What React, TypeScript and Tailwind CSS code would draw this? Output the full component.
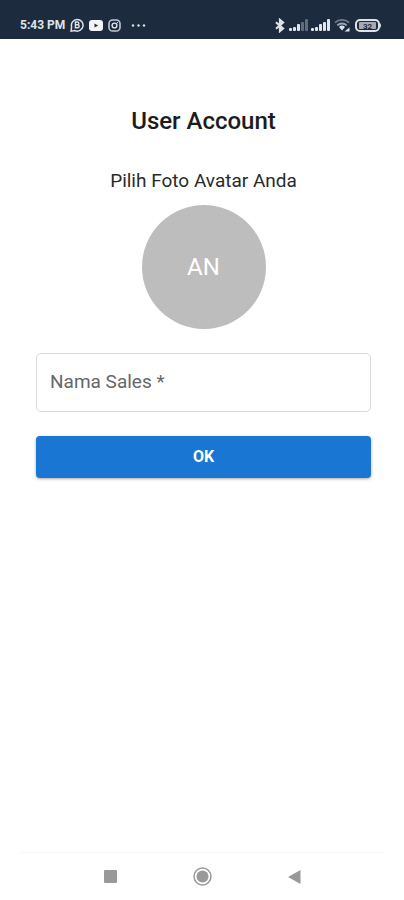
import { useState } from "react";

function SignalIcon({ level }: { level: number }) {
  return (
    <svg width="19" height="12" viewBox="0 0 19 12" fill="#e3e7ec" aria-hidden="true">
      {[3, 4, 7, 9, 12].map((height, i) => (
        <rect
          key={height}
          x={i * 4}
          y={12 - height}
          width="3"
          height={height}
          rx="1"
          opacity={i < level ? 1 : 0.35}
        />
      ))}
    </svg>
  );
}

function StatusBar() {
  return (
    <header className="flex h-[39px] items-end justify-between bg-[#1d2b3f] pr-[22px] pb-[6px] pl-5 text-[#dfe3e8]">
      <div className="flex h-4 items-center">
        <span className="text-xs font-bold">5:43 PM</span>
        <svg className="ml-[5px]" width="14" height="14" viewBox="0 0 13 13" fill="none" stroke="currentColor" aria-hidden="true">
          <path d="M1 12.2l.5-4A5.4 5.4 0 1 1 4.5 11.7z" strokeWidth="1.4" />
          <path d="M5 3.7h1.9a1.3 1.3 0 0 1 0 2.6H5zM5 6.3h2.1a1.4 1.4 0 0 1 0 2.8H5z" strokeWidth="1.3" />
        </svg>
        <svg className="ml-[5px]" width="14" height="11" viewBox="0 0 14 11" aria-hidden="true">
          <rect width="14" height="11" rx="3" fill="#f2f4f6" />
          <path d="M5.5 3.4v4.2l3.6-2.1z" fill="#1d2b3f" />
        </svg>
        <svg className="ml-[5px]" width="13" height="13" viewBox="0 0 13 13" fill="none" stroke="currentColor" aria-hidden="true">
          <rect x="1" y="1" width="11" height="11" rx="3.6" strokeWidth="1.6" opacity=".85" />
          <circle cx="6.5" cy="6.5" r="2.4" strokeWidth="1.4" />
          <circle cx="9.4" cy="3.6" r=".7" fill="currentColor" stroke="none" />
        </svg>
        <svg className="ml-[10px]" width="15" height="3" viewBox="0 0 15 3" fill="currentColor" aria-hidden="true">
          <circle cx="2" cy="1.5" r="1.2" />
          <circle cx="7.5" cy="1.5" r="1.2" />
          <circle cx="13" cy="1.5" r="1.2" />
        </svg>
      </div>
      <div className="flex h-4 items-center">
        <svg width="10" height="15" viewBox="0 0 10 15" fill="none" stroke="currentColor" strokeWidth="2.2" aria-hidden="true">
          <path d="M1 4.2l7 6.2L5 13V2l3 2.6L1 10.8" />
        </svg>
        <span className="ml-1"><SignalIcon level={3} /></span>
        <span className="ml-[3px]"><SignalIcon level={5} /></span>
        <svg className="ml-1" width="17" height="14" viewBox="0 0 17 14" fill="none" stroke="currentColor" aria-hidden="true">
          <path d="M1 4.6a10.5 10.5 0 0 1 14 0" strokeWidth="1.8" opacity=".45" />
          <path d="M3.3 7.3a7 7 0 0 1 9.4 0" strokeWidth="1.8" opacity=".65" />
          <path d="M5 9a4.4 4.4 0 0 1 6 0l-3 3.4z" fill="currentColor" stroke="none" />
          <path d="M10.5 13.5l5-4v4z" fill="currentColor" stroke="none" />
        </svg>
        <svg className="ml-1" width="27" height="13" viewBox="0 0 27 13" aria-hidden="true">
          <rect x="1" y="1" width="23" height="11" rx="4" fill="none" stroke="currentColor" strokeWidth="2" />
          <rect x="4" y="3" width="17" height="7" rx="1" fill="currentColor" opacity=".7" />
          <path d="M25 4q2 2.5 0 5z" fill="currentColor" />
          <text x="12.5" y="9.5" textAnchor="middle" fontSize="8" fontWeight="700" fill="#1d2b3f">32</text>
        </svg>
      </div>
    </header>
  );
}

function NavigationBar() {
  return (
    <nav className="mx-5 flex h-12 items-center justify-center gap-[72px] border-t border-[#f7f7f7] text-[#999999]">
      <button type="button" aria-label="Recent apps" className="flex h-6 w-5 items-center justify-center">
        <svg width="13" height="13" viewBox="0 0 13 13" fill="currentColor">
          <rect width="13" height="13" rx="1" />
        </svg>
      </button>
      <button type="button" aria-label="Home" className="flex h-6 w-5 items-center justify-center">
        <svg width="19" height="19" viewBox="0 0 19 19">
          <circle cx="9.5" cy="9.5" r="8.5" fill="none" stroke="currentColor" strokeWidth="1.5" />
          <circle cx="9.5" cy="9.5" r="6" fill="currentColor" />
        </svg>
      </button>
      <button type="button" aria-label="Back" className="flex h-6 w-5 items-center justify-center">
        <svg width="13" height="14" viewBox="0 0 13 14" fill="currentColor">
          <path d="M0 7L12.5 0v14z" />
        </svg>
      </button>
    </nav>
  );
}

export default function App() {
  const [name, setName] = useState("");

  const handleSubmit = (e: React.FormEvent) => {
    e.preventDefault();
    setName(name.trim());
  };

  return (
    <div className="flex min-h-screen flex-col bg-white font-[Roboto,sans-serif]">
      <StatusBar />
      <main className="flex flex-1 flex-col items-center pt-[66px] pr-[33px] pl-9">
        <h1 className="text-2xl font-medium text-[#1c1c1c]">User Account</h1>
        <p className="mt-[30px] text-[19px] leading-7 text-[#2a2a2a]">Pilih Foto Avatar Anda</p>
        <button
          type="button"
          className="mt-[10px] flex size-[124px] items-center justify-center rounded-full bg-[#bdbdbd] text-2xl text-white"
        >
          AN
        </button>

        <form onSubmit={handleSubmit} className="mt-6 flex w-full flex-col gap-6">
          <div className="relative">
            <label
              htmlFor="name"
              className={
                name
                  ? "pointer-events-none absolute -top-2 left-3 bg-white px-1 text-xs text-[#666666]"
                  : "pointer-events-none absolute inset-y-0 left-[14px] flex items-center text-[19px] text-[#666666]"
              }
            >
              Nama Sales *
            </label>
            <input
              id="name"
              type="text"
              required
              value={name}
              onChange={(e) => setName(e.target.value)}
              className="block h-[59px] w-full rounded-[5px] border border-[#d9d9d9] px-[14px] text-[19px] text-[#1c1c1c] focus:border-[#1976d2] focus:outline-none"
            />
          </div>
          <button
            type="submit"
            className="h-[42px] rounded-[4px] bg-[#1976d2] text-base font-bold text-white shadow-[0_1px_3px_rgba(0,0,0,0.35)] hover:bg-[#1565c0]"
          >
            OK
          </button>
        </form>
      </main>
      <NavigationBar />
    </div>
  );
}
